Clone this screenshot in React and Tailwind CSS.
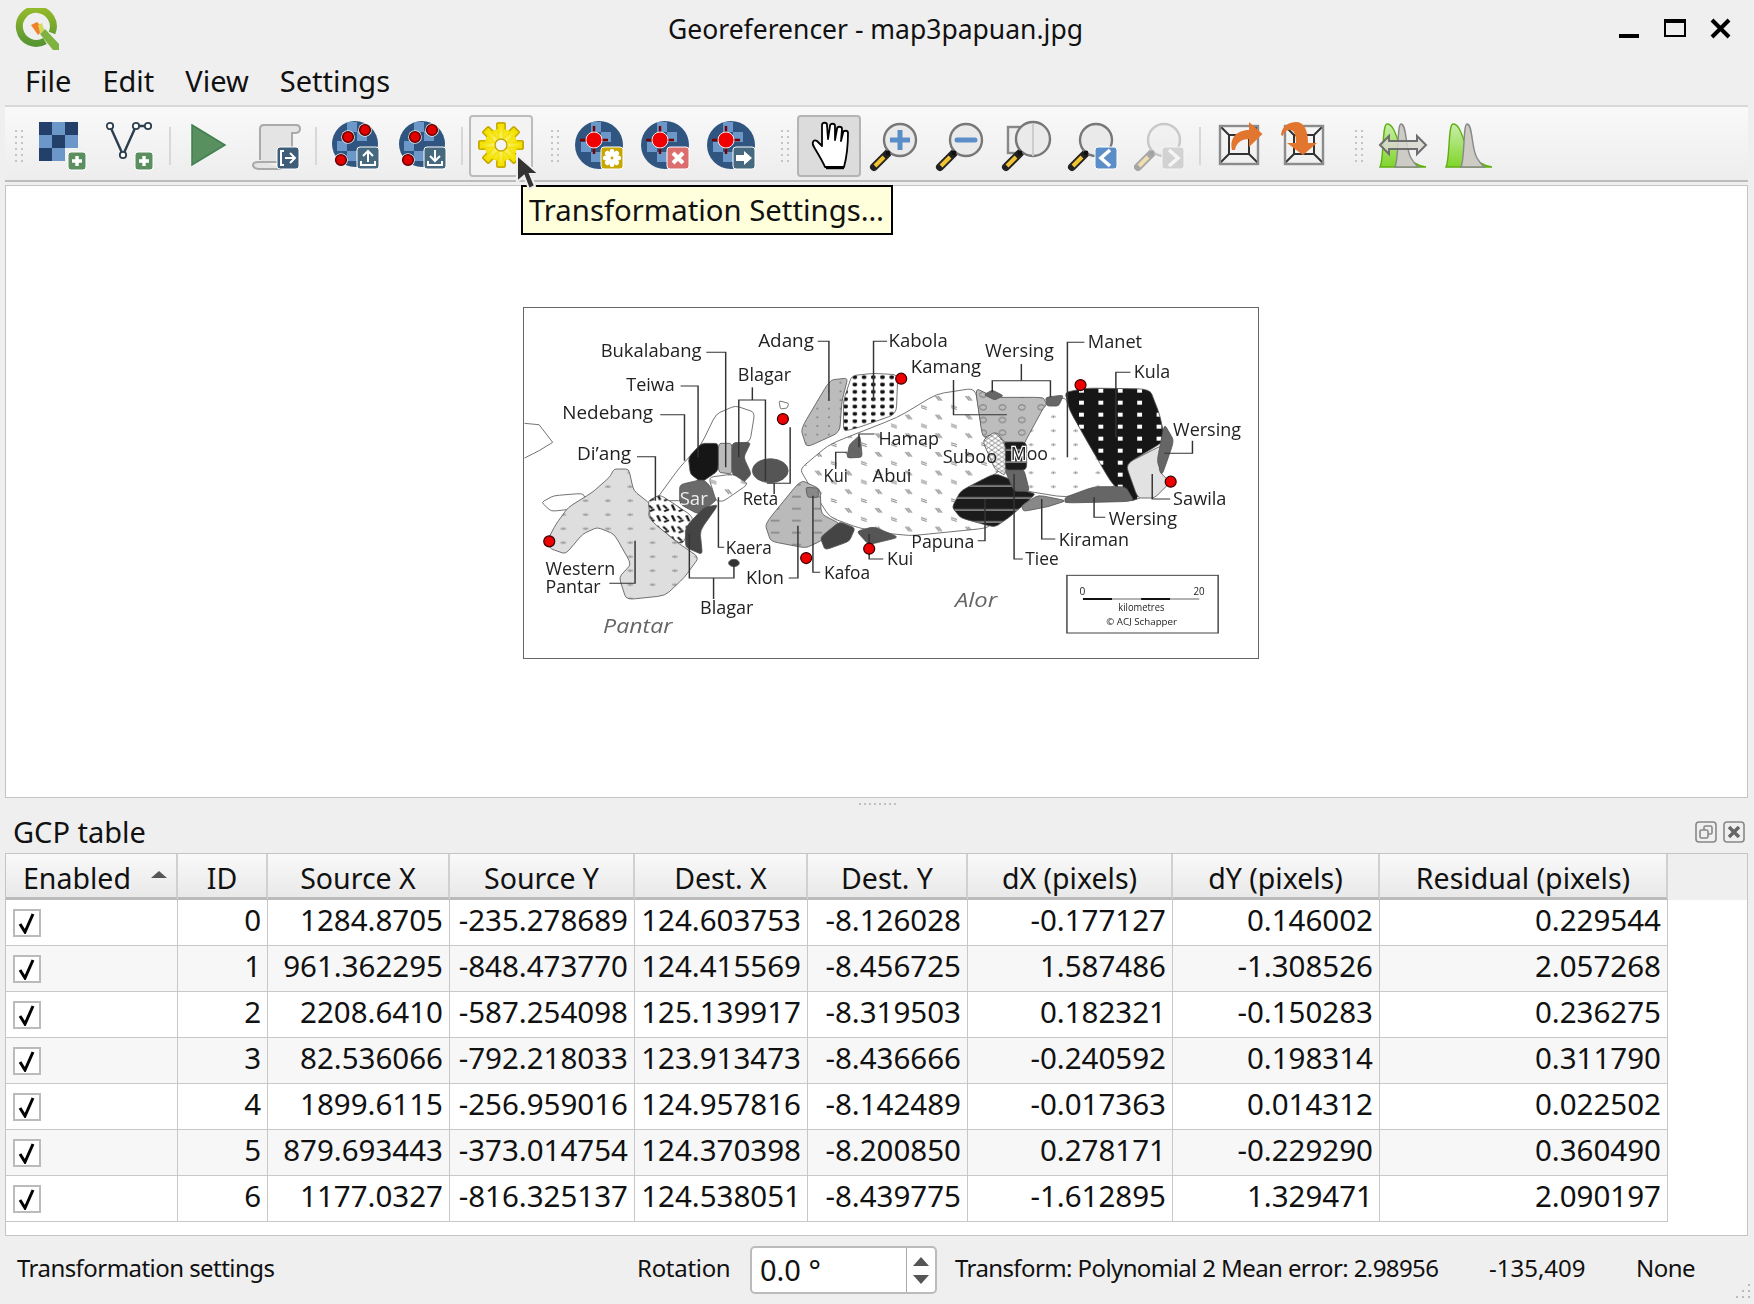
const FONT = "font-['Noto_Sans',sans-serif]";

const rows = [
  ["0", "1284.8705", "-235.278689", "124.603753", "-8.126028", "-0.177127", "0.146002", "0.229544"],
  ["1", "961.362295", "-848.473770", "124.415569", "-8.456725", "1.587486", "-1.308526", "2.057268"],
  ["2", "2208.6410", "-587.254098", "125.139917", "-8.319503", "0.182321", "-0.150283", "0.236275"],
  ["3", "82.536066", "-792.218033", "123.913473", "-8.436666", "-0.240592", "0.198314", "0.311790"],
  ["4", "1899.6115", "-256.959016", "124.957816", "-8.142489", "-0.017363", "0.014312", "0.022502"],
  ["5", "879.693443", "-373.014754", "124.370398", "-8.200850", "0.278171", "-0.229290", "0.360490"],
  ["6", "1177.0327", "-816.325137", "124.538051", "-8.439775", "-1.612895", "1.329471", "2.090197"],
];

const headers = ["ID", "Source X", "Source Y", "Dest. X", "Dest. Y", "dX (pixels)", "dY (pixels)", "Residual (pixels)"];

// map labels, measured off the reference: text, left, right, baseline (x in 2.063x, y in 3x crop units)
const labels = [
  ["Bukalabang", 187, 395, 168], ["Adang", 512, 627, 140], ["Kabola", 781, 903, 140],
  ["Wersing", 980, 1122, 168], ["Manet", 1192, 1304, 143], ["Kamang", 827, 972, 218],
  ["Kula", 1287, 1362, 233], ["Blagar", 470, 580, 240], ["Teiwa", 240, 340, 270],
  ["Nedebang", 108, 295, 356], ["Hamap", 760, 885, 432], ["Wersing", 1368, 1508, 407],
  ["Di’ang", 138, 250, 478], ["Suboo", 893, 1005, 486], ["Kui", 647, 697, 545],
  ["Abui", 748, 828, 545], ["Reta", 480, 553, 613], ["Sawila", 1368, 1478, 612],
  ["Wersing", 1235, 1376, 674], ["Kiraman", 1132, 1277, 736], ["Papuna", 828, 958, 742],
  ["Kaera", 445, 540, 760], ["Kui", 778, 832, 794], ["Tiee", 1063, 1132, 792],
  ["Western", 73, 217, 822], ["Pantar", 73, 187, 876], ["Kafoa", 648, 743, 836],
  ["Klon", 487, 565, 850], ["Blagar", 392, 502, 941],
];

const leaders = [
  "405,155 445,155 445,500", "352,256 388,256 388,470", "310,342 360,342 360,480",
  "262,468 300,468 300,600", "472,470 472,298 527,298 527,540", "500,260 500,298",
  "635,122 658,122 658,300", "778,122 750,122 750,300", "915,238 915,342 1025,342",
  "995,275 995,240 1115,240 1115,290", "1055,190 1055,240", "1185,125 1150,125 1150,470",
  "1280,215 1250,215 1250,410", "1408,420 1408,458 1350,458", "1325,520 1325,595 1362,595",
  "1205,590 1205,650 1228,650", "1097,595 1097,715 1125,715", "965,720 980,720 980,595",
  "1040,520 1040,775 1058,775", "430,590 430,740 442,740", "594,675 594,832 575,832",
  "625,585 625,815 640,815", "741,700 741,775 770,775", "258,720 258,848 205,848",
  "370,700 370,832 462,832 462,790", "420,832 420,895", "578,380 578,548 530,548",
  "545,548 545,580", "752,400 720,400 720,440", "672,505 672,455 695,455",
];

// land areas, bottom to top, corners softened by blob()
const areas = [
  ["65,605 90,585 150,578 158,600 130,625 85,632", "#fff"],
  ["300,600 350,500 395,430 425,340 465,315 505,335 495,425 430,440 360,600", "#fff"],
  ["75,725 95,670 120,620 170,575 205,530 215,505 245,505 255,570 290,610 285,650 340,720 390,770 360,830 320,885 240,897 225,830 250,790 215,700 180,680 150,700 115,760 85,745", "url(#plus)"],
  ["285,600 310,582 380,650 355,735 290,660", "url(#scribble)"],
  ["395,428 430,428 430,510 395,545 372,520 368,470", "#161616"],
  ["350,552 400,535 432,590 390,642 350,610", "#6a6a6a"],
  ["430,428 458,428 458,520 430,515", "#bbb"],
  ["458,426 497,425 482,470 498,520 480,548 458,520", "#555"],
  ["410,530 460,520 492,550 440,602 425,600", "url(#dash)"],
  ["400,620 430,612 392,690 397,762 362,740 362,680", "#444"],
  ["555,300 575,308 572,322 558,325", "#fff"],
  ["660,238 697,232 685,300 680,395 612,440 600,385", "url(#speck)"],
  ["705,225 750,218 800,222 797,340 720,380 688,392 688,300", "url(#kabola)"],
  ["598,505 660,430 800,350 880,280 960,262 975,400 1020,500 1000,520 920,600 1000,680 830,705 790,700 720,682 660,650 620,560", "url(#dash)"],
  ["960,262 1000,290 1100,290 1107,310 1090,400 1060,430 1020,425 1005,395 975,412", "url(#rings)"],
  ["1105,310 1145,290 1160,340 1210,470 1255,545 1240,562 1145,590 1060,570 1040,510 1060,430", "url(#whiteplus)"],
  ["1145,275 1190,262 1320,265 1340,340 1352,420 1272,490 1304,590 1280,602 1240,545 1190,420 1155,330", "url(#blackdots)"],
  ["1350,430 1338,510 1362,545 1330,592 1295,592 1270,490", "#e2e2e2"],
  ["1350,370 1370,420 1345,525 1335,480", "#666"],
  ["1000,518 1040,540 1060,570 1085,580 1030,650 1000,680 930,652 912,620 930,570", "url(#hstripe)"],
  ["1020,505 1060,505 1072,572 1040,572", "#666"],
  ["1055,615 1090,583 1148,600 1110,618 1060,632", "#888"],
  ["1145,590 1205,558 1270,558 1288,602 1145,607", "#666"],
  ["1016,424 1066,424 1066,508 1020,508", "url(#hstripe)"],
  ["975,420 1000,393 1022,430 1022,525 1000,505", "url(#hatch)"],
  ["600,538 640,565 642,640 682,670 640,722 610,742 538,722 526,670", "url(#dashes)"],
  ["680,663 712,682 700,722 650,748 640,710", "#444"],
  ["715,692 750,678 803,710 740,732", "#555"],
  ["700,432 722,403 727,470 695,472", "#666"],
  ["995,268 1018,285 1000,298 978,282", "#666"],
  ["1105,290 1142,283 1132,316 1108,316", "#666"],
  ["610,560 636,562 636,590 614,590", "#888"],
];

const redDots = [[807, 234], [563, 355], [1177, 253], [1363, 543], [741, 744], [611, 772], [81, 722]];

// closed path with each corner rounded over the last fifth of its edges
function blob(pts) {
  const p = pts.split(" ").map((s) => s.split(",").map(Number));
  const lerp = (a, b, t) => `${a[0] + (b[0] - a[0]) * t} ${a[1] + (b[1] - a[1]) * t}`;
  let d = "";
  p.forEach((pt, i) => {
    const prev = p[(i - 1 + p.length) % p.length];
    const next = p[(i + 1) % p.length];
    d += `${i ? "L" : "M"}${lerp(pt, prev, 0.2)}Q${pt[0]} ${pt[1]} ${lerp(pt, next, 0.2)}`;
  });
  return d + "Z";
}

function MapDrawing() {
  const px = (x) => x / 2.063;
  const py = (y) => y / 3;
  return (
    <svg width="736" height="352" className="block bg-white border border-[#666]">
      <defs>
        <pattern id="plus" width="46" height="42" patternUnits="userSpaceOnUse">
          <rect width="46" height="42" fill="#dedede" />
          <path d="M12 12h12M18 8v8" stroke="#777" strokeWidth="2" />
        </pattern>
        <pattern id="whiteplus" width="46" height="42" patternUnits="userSpaceOnUse">
          <rect width="46" height="42" fill="#fff" />
          <path d="M12 12h10M17 8v8" stroke="#777" strokeWidth="2" />
        </pattern>
        <pattern id="blackdots" width="40" height="36" patternUnits="userSpaceOnUse">
          <rect width="40" height="36" fill="#161616" />
          <rect x="14" y="12" width="10" height="12" fill="#fff" />
        </pattern>
        <pattern id="kabola" width="19" height="22" patternUnits="userSpaceOnUse">
          <rect width="19" height="22" fill="#fff" />
          <rect x="4" y="4" width="9" height="11" rx="3" fill="#111" />
        </pattern>
        <pattern id="dash" width="62" height="56" patternUnits="userSpaceOnUse">
          <rect width="62" height="56" fill="#fff" />
          <path d="M10 6l8 14M15 6l8 14M42 34l12 6M42 40l12 6" stroke="#777" strokeWidth="2.4" />
        </pattern>
        <pattern id="rings" width="40" height="38" patternUnits="userSpaceOnUse">
          <rect width="40" height="38" fill="#bdbdbd" />
          <ellipse cx="16" cy="16" rx="7" ry="8" fill="none" stroke="#666" strokeWidth="2" />
        </pattern>
        <pattern id="speck" width="24" height="26" patternUnits="userSpaceOnUse">
          <rect width="24" height="26" fill="#bcbcbc" />
          <rect x="8" y="10" width="4" height="4" fill="#777" />
        </pattern>
        <pattern id="dashes" width="44" height="36" patternUnits="userSpaceOnUse">
          <rect width="44" height="36" fill="#bababa" />
          <path d="M10 12h18" stroke="#666" strokeWidth="3" />
        </pattern>
        <pattern id="hstripe" width="30" height="36" patternUnits="userSpaceOnUse">
          <rect width="30" height="36" fill="#1b1b1b" />
          <rect y="14" width="30" height="4" fill="#aaa" />
        </pattern>
        <pattern id="scribble" width="30" height="32" patternUnits="userSpaceOnUse">
          <rect width="30" height="32" fill="#fff" />
          <path d="M4 4l6 18M16 6l8 10M18 24l10-6" stroke="#111" strokeWidth="5" />
        </pattern>
        <pattern id="hatch" width="14" height="14" patternUnits="userSpaceOnUse">
          <rect width="14" height="14" fill="#fff" />
          <path d="M0 0l14 14M14 0L0 14" stroke="#777" strokeWidth="2" />
        </pattern>
      </defs>
      <g className="blur-[0.5px]">
        <g transform="translate(-14 -7.3) scale(0.4847 0.3333)" stroke="#555" strokeWidth="2">
          <path d="M30 368L60 372L88 425L60 450L30 472" fill="none" />
          {areas.map(([pts, fill]) => (
            <path key={pts} d={blob(pts)} fill={fill} />
          ))}
          <ellipse cx="537" cy="510" rx="37" ry="36" fill="#555" />
          <ellipse cx="462" cy="787" rx="11" ry="11" fill="#333" />
          <g fill="none" stroke="#333" strokeWidth="3">
            {leaders.map((p) => (
              <polyline key={p} points={p} />
            ))}
          </g>
          <rect x="1149" y="824" width="312" height="173" fill="#fff" stroke="#444" strokeWidth="3" />
          <path d="M1182 895h60M1302 895h60" stroke="#111" strokeWidth="6" />
          <path d="M1242 895h60M1362 895h60" stroke="#999" strokeWidth="4" />
        </g>
        <g transform="translate(-14 -7.3)" className="font-['Open_Sans',sans-serif]" fill="#222">
          {labels.map(([t, a, b, y], i) => (
            <text key={i} x={px(a)} y={py(y)} fontSize="18" textLength={px(b - a)} lengthAdjust="spacingAndGlyphs">
              {t}
            </text>
          ))}
          <text x={px(350)} y={py(612)} fontSize="18" fill="#eee" textLength={px(58)} lengthAdjust="spacingAndGlyphs">Sar</text>
          <text x={px(1033)} y={py(478)} fontSize="18" fill="#222" stroke="#fff" strokeWidth="2.5" paintOrder="stroke" textLength={px(77)} lengthAdjust="spacingAndGlyphs">Moo</text>
          <text x={px(918)} y={py(920)} fontSize="20" fontStyle="italic" fill="#666" textLength={px(87)} lengthAdjust="spacingAndGlyphs">Alor</text>
          <text x={px(192)} y={py(998)} fontSize="20" fontStyle="italic" fill="#666" textLength={px(143)} lengthAdjust="spacingAndGlyphs">Pantar</text>
          <text x={px(1175)} y={py(884)} fontSize="11" textLength={px(12)} lengthAdjust="spacingAndGlyphs">0</text>
          <text x={px(1410)} y={py(884)} fontSize="11" textLength={px(23)} lengthAdjust="spacingAndGlyphs">20</text>
          <text x={px(1255)} y={py(930)} fontSize="10" textLength={px(95)} lengthAdjust="spacingAndGlyphs">kilometres</text>
          <text x={px(1230)} y={py(973)} fontSize="9" textLength={px(146)} lengthAdjust="spacingAndGlyphs">© ACJ Schapper</text>
        </g>
      </g>
      <g transform="translate(-14 -7.3)">
        {redDots.map(([x, y]) => (
          <circle key={x} cx={px(x)} cy={py(y)} r="5.5" fill="#ee0000" stroke="#300" strokeWidth="1.2" />
        ))}
      </g>
    </svg>
  );
}

function Logo() {
  return (
    <svg width="46" height="44" viewBox="0 0 46 44" className="ml-[14px]">
      <defs>
        <linearGradient id="lg" x1="0" y1="0" x2="0" y2="1">
          <stop offset="0" stopColor="#93b92c" />
          <stop offset="1" stopColor="#589632" />
        </linearGradient>
      </defs>
      <path d="M31 33A17 17 0 1 1 38 25" fill="none" stroke="url(#lg)" strokeWidth="7" />
      <path d="M17 17l6-3 7 7-6 6z" fill="#f0802a" />
      <path d="M24 17l4-2 2 7-4 3z" fill="#d5db58" />
      <path d="M26 26l5-5 14 15v6h-6z" fill="#7fb23e" />
    </svg>
  );
}

function Grip({ className = "" }) {
  return (
    <div className={`grid grid-cols-2 gap-x-[4px] gap-y-[4px] w-[8px] shrink-0 ${className}`}>
      {Array.from({ length: 12 }).map((_, i) => (
        <span key={i} className="w-[2px] h-[2px] bg-[#c4c4c4]" />
      ))}
    </div>
  );
}

function Sep({ className }) {
  return <div className={`w-[2px] h-[38px] bg-[#d8d8d8] shrink-0 ${className}`} />;
}

function Btn({ className, active, children }) {
  const look = active === "hover"
    ? "border-2 border-[#bcbcbc] bg-[#f3f3f3]"
    : active === "on"
      ? "border-2 border-[#b4b4b4] bg-[#dcdcdc]"
      : "border-2 border-transparent";
  return (
    <div className={`w-[64px] h-[62px] shrink-0 rounded-[4px] flex items-center justify-center ${look} ${className}`}>
      {children}
    </div>
  );
}

function Badge({ x, y, size = 22, fill, children }) {
  return (
    <g transform={`translate(${x} ${y})`}>
      <rect width={size} height={size} rx="3" fill={fill} stroke="#fff" strokeWidth="1" />
      {children}
    </g>
  );
}

function PlusBadge() {
  return (
    <Badge x="29" y="30" size="18" fill="#5b8f60">
      <path d="M9 4v10M4 9h10" stroke="#fff" strokeWidth="3.4" />
    </Badge>
  );
}

function Globe({ cx = 24, cy = 22, r = 23 }) {
  return (
    <g>
      <circle cx={cx} cy={cy} r={r} fill="#2f5580" />
      <path d={`M${cx - 8} ${cy - r + 1}h10v10h-10zM${cx + 2} ${cy - 13}h10v10h-10zM${cx - 18} ${cy - 3}h10v10h-10zM${cx - 8} ${cy + 7}h10v10h-10zM${cx + 2} ${cy + 7}h10v8h-10z`} fill="#6b97c9" />
    </g>
  );
}

function GcpDots() {
  return (
    <g>
      {[[17, 15], [34, 8], [10, 38]].map(([x, y]) => (
        <g key={x}>
          <circle cx={x} cy={y} r="6.8" fill="#eee" />
          <circle cx={x} cy={y} r="5.4" fill="#e00000" stroke="#5a0000" strokeWidth="1.4" />
        </g>
      ))}
    </g>
  );
}

function Cross() {
  return (
    <g>
      <path d="M20 4v28M6 18h28" stroke="#7a0000" strokeWidth="2.4" />
      <circle cx="20" cy="18" r="8" fill="#f00000" stroke="#eee" strokeWidth="1" />
    </g>
  );
}

function Icon({ children }) {
  return (
    <svg width="48" height="48" viewBox="0 0 48 48" className="overflow-visible">
      {children}
    </svg>
  );
}

function Lens({ x = 29, y = 18, r = 16 }) {
  return (
    <g>
      <path d="M3 45l14-14" stroke="#222" strokeWidth="8" strokeLinecap="round" />
      <path d="M4 44l9-9" stroke="#f1c232" strokeWidth="4" />
      <circle cx={x} cy={y} r={r} fill="#eaeaea" stroke="#777" strokeWidth="2.4" />
      <circle cx="17" cy="31" r="2.4" fill="#111" />
    </g>
  );
}

function Gear({ size = 22, cx = 24, cy = 23, fill = "url(#gearfill)", stroke = "#c6a800", hole = "#f4f4f4" }) {
  const teeth = [0, 45, 90, 135, 180, 225, 270, 315];
  const w = size * 0.36;
  return (
    <g>
      {teeth.map((a) => (
        <rect key={a} x={cx - w / 2} y={cy - size} width={w} height={size * 2} rx="1" fill={fill} stroke={stroke} strokeWidth="1.6" transform={`rotate(${a} ${cx} ${cy})`} />
      ))}
      <circle cx={cx} cy={cy} r={size * 0.74} fill={fill} />
      {teeth.map((a) => (
        <rect key={a} x={cx - w / 2 + 0.8} y={cy - size + 1} width={w - 1.6} height={size * 2 - 2} fill={fill} transform={`rotate(${a} ${cx} ${cy})`} />
      ))}
      <circle cx={cx} cy={cy} r={size * 0.27} fill={hole} stroke={stroke} strokeWidth="1.4" />
    </g>
  );
}

function Frame() {
  return (
    <g fill="none">
      <path d="M5 4l10 10M43 4L33 14M5 41l10-10M43 41L33 31" stroke="#333" strokeWidth="2" />
      <rect x="14" y="13" width="20" height="19" stroke="#333" strokeWidth="2" />
      <rect x="5" y="4" width="38" height="38" stroke="#8c8c8c" strokeWidth="2.4" />
    </g>
  );
}

function Bells() {
  return (
    <g>
      <path d="M1 45C5 38 3 2 8 2C16 2 18 20 24 30C30 38 38 44 47 45Z" fill="url(#bellgreen)" stroke="#5faf10" strokeWidth="1.4" />
      <path d="M16 45C20 36 18 2 22 2C28 2 26 26 32 36C35 41 38 44 39 45Z" fill="#ccccc4" stroke="#888" strokeWidth="1.4" />
    </g>
  );
}

export default function App() {
  return (
    <div className={`w-[1754px] h-[1304px] bg-[#efefef] text-[#111] overflow-hidden relative flex flex-col ${FONT}`}>
      {/* title bar */}
      <div className="h-[60px] flex items-center shrink-0">
        <Logo />
        <div className="flex-1 text-center text-[26.5px] pl-[78px] -mt-[1px]">Georeferencer - map3papuan.jpg</div>
        <svg width="125" height="24" viewBox="0 0 125 24" className="mr-[16px]">
          <rect x="6" y="16" width="20" height="4" fill="#000" />
          <rect x="52" y="2" width="20" height="16" fill="none" stroke="#000" strokeWidth="2" />
          <rect x="52" y="1" width="20" height="4" fill="#000" />
          <path d="M99 2l17 17M116 2L99 19" stroke="#000" strokeWidth="4" />
        </svg>
      </div>

      {/* menu */}
      <div className="h-[45px] flex items-center text-[29px] pl-[25px] pb-[4px] gap-[31px] shrink-0">
        <span>File</span>
        <span>Edit</span>
        <span>View</span>
        <span>Settings</span>
      </div>

      {/* toolbar */}
      <div className="h-[77px] ml-[5px] mr-[6px] border-t-2 border-[#d8d8d8] border-b-2 border-b-[#bcbcbc] bg-gradient-to-b from-[#f9f9f9] to-[#ededed] flex items-center pl-[10px] pt-[5px] shrink-0">
        <Grip />
        <Btn className="ml-[8px]">
          <Icon>
            <path d="M0 0h13v13H0zM26 0h13v13H26zM13 13h13v13H13zM0 26h13v13H0z" fill="#22406a" />
            <path d="M13 0h13v13H13zM0 13h13v13H0zM26 13h13v13H26zM13 26h13v13H13z" fill="#6b97c9" />
            <PlusBadge />
          </Icon>
        </Btn>
        <Btn className="ml-[3px]">
          <Icon>
            <polyline points="4,4 17,33 30,4 42,4" fill="none" stroke="#2c3e50" strokeWidth="2.4" />
            {[[4, 4], [17, 33], [30, 4], [42, 4]].map(([x, y]) => (
              <circle key={x} cx={x} cy={y} r="3.2" fill="#fff" stroke="#2c3e50" strokeWidth="1.8" />
            ))}
            <PlusBadge />
          </Icon>
        </Btn>
        <Sep className="ml-[7px]" />
        <Btn className="ml-[5px]">
          <Icon>
            <path d="M8 3L41 23L8 43Z" fill="#5a8f5f" stroke="#3f8050" strokeWidth="1.5" />
          </Icon>
        </Btn>
        <Btn className="ml-[4px]">
          <Icon>
            <path d="M8 38V7Q8 3 12 3H44Q48 3 48 7T43 11H40V40H6Q1 40 1 43T6 47H30" fill="#e4e4e4" stroke="#aaa" strokeWidth="2" />
            <Badge x="25" y="25" fill="#3d5d78">
              <path d="M7 4H4V18H7M8 11H18M13 6l5 5-5 5" fill="none" stroke="#fff" strokeWidth="2" />
            </Badge>
          </Icon>
        </Btn>
        <Sep className="ml-[7px]" />
        <Btn className="ml-[6px]">
          <Icon>
            <Globe />
            <GcpDots />
            <Badge x="26" y="25" fill="#47697f">
              <path d="M11 15V5M6 9l5-5 5 5M4 14v4h14v-4" fill="none" stroke="#fff" strokeWidth="2" />
            </Badge>
          </Icon>
        </Btn>
        <Btn className="ml-[3px]">
          <Icon>
            <Globe />
            <GcpDots />
            <Badge x="26" y="25" fill="#47697f">
              <path d="M11 3V13M6 9l5 5 5-5M4 14v4h14v-4" fill="none" stroke="#fff" strokeWidth="2" />
            </Badge>
          </Icon>
        </Btn>
        <Sep className="ml-[7px]" />
        <Btn className="ml-[6px]" active="hover">
          <Icon>
            <defs>
              <radialGradient id="gearfill">
                <stop offset="0" stopColor="#fff8a0" />
                <stop offset="1" stopColor="#f3e100" />
              </radialGradient>
            </defs>
            <Gear />
          </Icon>
        </Btn>
        <Grip className="ml-[18px]" />
        <Btn className="ml-[7px]">
          <Icon>
            <Globe cx={25} cy={23} r={24} />
            <Cross />
            <Badge x="27" y="25" fill="#c8a800">
              <Gear size={8} cx={11} cy={11} fill="#fff" stroke="#fff" hole="#c8a800" />
            </Badge>
          </Icon>
        </Btn>
        <Btn className="ml-[2px]">
          <Icon>
            <Globe cx={25} cy={23} r={24} />
            <Cross />
            <Badge x="27" y="25" fill="#dc6e6e">
              <path d="M6 6l10 10M16 6L6 16" stroke="#fff" strokeWidth="4" />
            </Badge>
          </Icon>
        </Btn>
        <Btn className="ml-[2px]">
          <Icon>
            <Globe cx={25} cy={23} r={24} />
            <Cross />
            <Badge x="27" y="25" fill="#47697f">
              <path d="M3 8h8V4l8 7-8 7v-4H3z" fill="#fff" />
            </Badge>
          </Icon>
        </Btn>
        <Grip className="ml-[19px]" />
        <Btn className="ml-[8px]" active="on">
          <Icon>
            <path d="M20 45C17 38 13 32 9 25C6 20 9 17 12 19L17 24L17 3C17 0 22 0 22 3L23 17L25 4C25 1 30 1 30 4L30 18L32 7C32 4 37 4 37 7L36 19L38 11C38 8 43 8 43 11C43 24 42 34 39 45Z" fill="#fff" stroke="#000" strokeWidth="1.8" strokeLinejoin="round" />
            <path d="M21 46H39" stroke="#000" strokeWidth="2.4" />
          </Icon>
        </Btn>
        <Btn className="ml-[2px]">
          <Icon>
            <Lens />
            <path d="M29 8v20M19 18h20" stroke="#5b8ec8" strokeWidth="5" />
          </Icon>
        </Btn>
        <Btn className="ml-[2px]">
          <Icon>
            <Lens />
            <path d="M20 18h18" stroke="#5b8ec8" strokeWidth="5" strokeLinecap="round" />
          </Icon>
        </Btn>
        <Btn className="ml-[2px]">
          <Icon>
            <rect x="5" y="5" width="26" height="26" fill="#efefef" stroke="#888" strokeWidth="2.4" />
            <Lens x={30} y={17} r={17} />
            <path d="M30 2v32" stroke="#ccc" strokeWidth="2" />
          </Icon>
        </Btn>
        <Btn className="ml-[2px]">
          <Icon>
            <Lens x={27} y={18} />
            <Badge x="26" y="25" fill="#5b8ec8">
              <path d="M15 3L6 11l9 8" fill="none" stroke="#fff" strokeWidth="3.6" />
            </Badge>
          </Icon>
        </Btn>
        <Btn className="ml-[2px]">
          <Icon>
            <g opacity="0.35">
              <Lens x={29} y={18} />
              <Badge x="27" y="25" fill="#9a9a9a">
                <path d="M7 3l9 8-9 8" fill="none" stroke="#fff" strokeWidth="3.6" />
              </Badge>
            </g>
          </Icon>
        </Btn>
        <Sep className="ml-[8px]" />
        <Btn className="ml-[6px]">
          <Icon>
            <Frame />
            <path d="M17 28C14 14 24 8 34 8V0L47.5 12L34 25V17C28 17 21 20 20 28Z" fill="#e2762f" />
          </Icon>
        </Btn>
        <Btn className="ml-[1px]">
          <Icon>
            <Frame />
            <path d="M1 13C2 3 10 0 16 0C24 0 28 8 28 21H37L23 33L7 21H16C16 12 14 8 10 8C6 8 4 10 3 14Z" fill="#e2762f" />
          </Icon>
        </Btn>
        <Grip className="ml-[19px]" />
        <Btn className="ml-[8px]">
          <Icon>
            <defs>
              <linearGradient id="bellgreen" x1="0" y1="0" x2="0" y2="1">
                <stop offset="0" stopColor="#c9eeaa" />
                <stop offset="1" stopColor="#80d52a" />
              </linearGradient>
            </defs>
            <Bells />
            <path d="M1 23L10 14V19H38V14L47 23L38 32V27H10V32Z" fill="#d8d8d0" fillOpacity="0.85" stroke="#6e6e6e" strokeWidth="2" />
          </Icon>
        </Btn>
        <Btn className="ml-[2px]">
          <Icon>
            <Bells />
          </Icon>
        </Btn>
      </div>

      {/* map canvas */}
      <div className="h-[613px] ml-[5px] mr-[6px] mt-[3px] border border-[#c4c4c4] bg-white pl-[517px] pt-[121px] shrink-0">
        <MapDrawing />
      </div>

      {/* splitter */}
      <div className="h-[12px] flex items-center justify-center gap-[3px] shrink-0">
        {Array.from({ length: 8 }).map((_, i) => (
          <span key={i} className="w-[2px] h-[2px] bg-[#c0c0c0]" />
        ))}
      </div>

      {/* dock title */}
      <div className="h-[43px] flex items-center pl-[13px] pr-[9px] shrink-0">
        <span className="flex-1 text-[29px]">GCP table</span>
        <svg width="50" height="22" viewBox="0 0 50 22">
          <rect x="1" y="1" width="20" height="20" rx="3" fill="none" stroke="#888" strokeWidth="1.6" />
          <rect x="9" y="5" width="8" height="8" rx="1.5" fill="none" stroke="#888" strokeWidth="1.6" />
          <rect x="5" y="9" width="8" height="8" rx="1.5" fill="#efefef" stroke="#888" strokeWidth="1.6" />
          <rect x="29" y="1" width="20" height="20" rx="3" fill="none" stroke="#888" strokeWidth="1.6" />
          <path d="M34 6l10 10M44 6L34 16" stroke="#666" strokeWidth="3.4" />
        </svg>
      </div>

      {/* GCP table */}
      <div className="h-[383px] ml-[5px] mr-[6px] border border-[#c4c4c4] bg-white shrink-0 overflow-hidden">
        <table className="w-full table-fixed border-separate border-spacing-0 text-[29.5px] leading-none">
          <colgroup>
            <col className="w-[172px]" />
            <col className="w-[90px]" />
            <col className="w-[182px]" />
            <col className="w-[185px]" />
            <col className="w-[173px]" />
            <col className="w-[160px]" />
            <col className="w-[205px]" />
            <col className="w-[207px]" />
            <col className="w-[288px]" />
            <col />
          </colgroup>
          <thead>
            <tr className="h-[46px] text-[28.5px]">
              <th className="font-normal text-left pl-[17px] pt-[5px] bg-gradient-to-b from-[#f9f9f9] to-[#e9e9e9] border-r-2 border-r-[#d0d0d0] border-b-[3px] border-b-[#bbb]">
                <div className="flex items-center justify-between pr-[9px]">
                  <span>Enabled</span>
                  <span className="w-0 h-0 border-x-[8px] border-x-transparent border-b-[7px] border-b-[#555] -mt-[8px]" />
                </div>
              </th>
              {headers.map((h) => (
                <th key={h} className="font-normal text-center pt-[5px] bg-gradient-to-b from-[#f9f9f9] to-[#e9e9e9] border-r-2 border-r-[#d0d0d0] border-b-[3px] border-b-[#bbb]">
                  {h}
                </th>
              ))}
              <th className="bg-[#efefef]" />
            </tr>
          </thead>
          <tbody>
            {rows.map((r, i) => (
              <tr key={r[0]} className={`h-[46px] ${i % 2 ? "bg-[#f7f7f7]" : "bg-white"}`}>
                <td className="pl-[7px] border-r border-b border-[#c8c8c8]">
                  <span className="w-[28px] h-[28px] border-2 border-[#bbb] bg-white flex items-center justify-center">
                    <svg width="20" height="22" viewBox="0 0 20 22">
                      <path d="M3 12l5 8L16 2" fill="none" stroke="#000" strokeWidth="3" />
                    </svg>
                  </span>
                </td>
                {r.map((c, j) => (
                  <td key={j} className="text-right pr-[6px] pb-[5px] border-r border-b border-[#c8c8c8] whitespace-nowrap">
                    {c}
                  </td>
                ))}
                <td className="bg-white" />
              </tr>
            ))}
          </tbody>
        </table>
      </div>

      {/* status bar */}
      <div className="flex-1 flex items-center text-[24px] pl-[17px] relative">
        <span className="w-[620px] mb-[4px] tracking-[-0.55px]">Transformation settings</span>
        <span className="w-[113px] mb-[4px] tracking-[-0.3px]">Rotation</span>
        <div className="w-[187px] h-[48px] border-2 border-[#bbb] rounded-[5px] bg-white flex overflow-hidden">
          <span className="flex-1 text-[29px] leading-[44px] pl-[8px]">0.0 °</span>
          <div className="w-[29px] border-l border-[#aaa] flex flex-col items-center justify-center gap-[9px]">
            <span className="w-0 h-0 border-x-[8px] border-x-transparent border-b-[9px] border-b-[#555]" />
            <span className="w-0 h-0 border-x-[8px] border-x-transparent border-t-[9px] border-t-[#555]" />
          </div>
        </div>
        <span className="ml-[18px] w-[534px] mb-[4px] tracking-[-0.6px]">Transform: Polynomial 2 Mean error: 2.98956</span>
        <span className="w-[147px] mb-[4px]">-135,409</span>
        <span className="mb-[4px] tracking-[-0.5px]">None</span>
        <svg width="20" height="20" viewBox="0 0 20 20" className="absolute right-[2px] bottom-[3px]">
          <path d="M16 3h2v2h-2zM10 9h2v2h-2zM16 9h2v2h-2zM4 15h2v2H4zM10 15h2v2h-2zM16 15h2v2h-2z" fill="#bbb" />
        </svg>
      </div>

      {/* tooltip and mouse pointer, both float over the toolbar and canvas */}
      <div className="absolute left-[521px] top-[185px] w-[372px] h-[50px] border-2 border-black bg-[#ffffdc] text-[29.3px] leading-[46px] pl-[6px] whitespace-nowrap">
        Transformation Settings…
      </div>
      <svg width="30" height="40" viewBox="0 0 30 40" className="absolute left-[514px] top-[153px]">
        <path d="M3 2V29L10 23L15 36L21 33L16 21H25Z" fill="#333" stroke="#eee" strokeWidth="2" />
      </svg>
    </div>
  );
}
